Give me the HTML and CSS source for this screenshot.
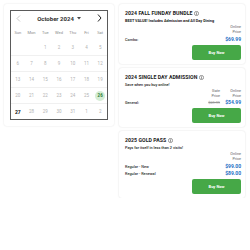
FILE: index.html
```html
<!DOCTYPE html>
<html>
<head>
<meta charset="utf-8">
<link rel="stylesheet" href="styles.css">
</head>
<body>
<div class="page">
  <div class="cal-card">
    <div class="cal">
      <div class="cal-head">
        <svg class="chev chev-prev" width="5" height="7" viewBox="0 0 5 7"><path d="M4 0.5 L1 3.5 L4 6.5" fill="none" stroke="#bbb" stroke-width="0.8"/></svg>
        <div class="month">October 2024 <svg class="caret" width="4" height="3" viewBox="0 0 4 3"><path d="M0 0 H4 L2 2.5 Z" fill="#444"/></svg></div>
        <svg class="chev chev-next" width="5" height="8" viewBox="0 0 5 8"><path d="M1 0.5 L4 4 L1 7.5" fill="none" stroke="#222" stroke-width="1"/></svg>
      </div>
      <div class="week">
        <span>Sun</span><span>Mon</span><span>Tue</span><span>Wed</span><span>Thu</span><span>Fri</span><span>Sat</span>
      </div>
      <div class="row"><span></span><span></span><span>1</span><span>2</span><span>3</span><span>4</span><span>5</span></div>
      <div class="row"><span>6</span><span>7</span><span>8</span><span>9</span><span>10</span><span>11</span><span>12</span></div>
      <div class="row"><span>13</span><span>14</span><span>15</span><span>16</span><span>17</span><span>18</span><span>19</span></div>
      <div class="row"><span>20</span><span>21</span><span>22</span><span>23</span><span>24</span><span>25</span><span><b class="sel">26</b></span></div>
      <div class="row"><span class="today">27</span><span>28</span><span>29</span><span>30</span><span>31</span><span>1</span><span>2</span></div>
    </div>
  </div>

  <div class="cards">
    <div class="card">
      <div class="title">2024 FALL FUNDAY BUNDLE <svg class="info" width="5" height="5" viewBox="0 0 10 10"><circle cx="5" cy="5" r="4.2" fill="none" stroke="#444" stroke-width="1.1"/><rect x="4.4" y="4.2" width="1.2" height="3.4" fill="#444"/><rect x="4.4" y="2.3" width="1.2" height="1.2" fill="#444"/></svg></div>
      <div class="sub">BEST VALUE! Includes Admission and All Day Dining</div>
      <div class="prices head"><span class="col online">Online<br>Price</span></div>
      <div class="prices"><span class="label">Combo:</span><span class="col online price">$69.99</span></div>
      <div class="btn-row"><button class="buy">Buy Now</button></div>
    </div>

    <div class="card">
      <div class="title">2024 SINGLE DAY ADMISSION <svg class="info" width="5" height="5" viewBox="0 0 10 10"><circle cx="5" cy="5" r="4.2" fill="none" stroke="#444" stroke-width="1.1"/><rect x="4.4" y="4.2" width="1.2" height="3.4" fill="#444"/><rect x="4.4" y="2.3" width="1.2" height="1.2" fill="#444"/></svg></div>
      <div class="sub light">Save when you buy online!</div>
      <div class="prices head"><span class="col gate">Gate<br>Price</span><span class="col online">Online<br>Price</span></div>
      <div class="prices"><span class="label">General:</span><span class="col gate old">$69.99</span><span class="col online price">$54.99</span></div>
      <div class="btn-row"><button class="buy">Buy Now</button></div>
    </div>

    <div class="card">
      <div class="title">2025 GOLD PASS <svg class="info" width="5" height="5" viewBox="0 0 10 10"><circle cx="5" cy="5" r="4.2" fill="none" stroke="#444" stroke-width="1.1"/><rect x="4.4" y="4.2" width="1.2" height="3.4" fill="#444"/><rect x="4.4" y="2.3" width="1.2" height="1.2" fill="#444"/></svg></div>
      <div class="sub light">Pays for itself in less than 2 visits!</div>
      <div class="prices head"><span class="col online">Online<br>Price</span></div>
      <div class="prices"><span class="label">Regular - New</span><span class="col online price">$99.00</span></div>
      <div class="prices"><span class="label">Regular - Renewal</span><span class="col online price">$89.00</span></div>
      <div class="btn-row"><button class="buy">Buy Now</button></div>
    </div>
  </div>
</div>
</body>
</html>
```

FILE: styles.css
```css
html, body {
  margin: 0;
  padding: 0;
  background: #fff;
}
body {
  font-family: Roboto, "Liberation Sans", Arial, sans-serif;
  color: #222;
}
.page {
  display: flex;
  align-items: flex-start;
  padding: 4px 0 0 4px;
  gap: 5px;
}
.cal-card {
  padding: 6px;
  background: #fff;
  border-radius: 3px;
  box-shadow: 0 0 2px rgba(0,0,0,0.12);
}
.cal {
  width: 96px;
  border: 1px solid #5a5a5a;
}
.cal-head {
  height: 14px;
  display: flex;
  align-items: center;
  justify-content: space-between;
  padding: 0 5px 0 5px;
}
.month {
  font-size: 6px;
  font-weight: 700;
  color: #333;
  display: flex;
  align-items: center;
  gap: 3px;
}
.caret { display: block; }
.chev { display: block; }
.week, .row {
  display: grid;
  grid-template-columns: repeat(7, 1fr);
  text-align: center;
}
.week {
  height: 14px;
  align-items: center;
  font-size: 4px;
  color: #8a8a8a;
}
.row {
  height: 16px;
  align-items: center;
  font-size: 4.5px;
  color: #b3b3b3;
}
.row + .row {
  border-top: 1px solid #f0f0f0;
  height: 15px;
}
.row span {
  display: flex;
  justify-content: center;
  align-items: center;
}
.today {
  color: #111;
  font-weight: 700;
  font-size: 5px;
}
.sel {
  width: 10px;
  height: 10px;
  border-radius: 50%;
  background: #d5edd4;
  color: #2e7d32;
  font-weight: 700;
  display: flex;
  align-items: center;
  justify-content: center;
}
.cards {
  width: 126px;
  display: flex;
  flex-direction: column;
  gap: 4px;
}
.card {
  background: #fff;
  border-radius: 3px;
  box-shadow: 0 0 2px rgba(0,0,0,0.14);
  padding: 6px 4px 4px 6px;
}
.title {
  font-size: 5.2px;
  font-weight: 700;
  line-height: 7px;
  letter-spacing: 0.05px;
  display: flex;
  align-items: center;
  gap: 1.5px;
  color: #222;
}
.sub {
  font-size: 3.8px;
  font-weight: 700;
  line-height: 7px;
  color: #222;
}
.sub.light { font-weight: 500; }
.prices {
  display: flex;
  justify-content: flex-end;
  align-items: center;
  font-size: 3.8px;
  line-height: 7px;
  gap: 4px;
}
.prices.head {
  line-height: 5px;
  color: #666;
  margin-bottom: 1.5px;
}
.label {
  margin-right: auto;
  font-weight: 500;
  color: #333;
}
.col {
  text-align: right;
}
.col.gate { width: 16px; }
.col.online { width: 17px; }
.price {
  color: #1e6fc4;
  font-weight: 700;
  font-size: 5px;
}
.old {
  color: #999;
  text-decoration: line-through;
}
.btn-row {
  display: flex;
  justify-content: flex-end;
  margin-top: 2px;
}
.buy {
  width: 49px;
  height: 15px;
  border: none;
  border-radius: 2px;
  background: #46a847;
  color: #fff;
  font-family: inherit;
  font-size: 4px;
  font-weight: 700;
  padding: 0;
}
```
